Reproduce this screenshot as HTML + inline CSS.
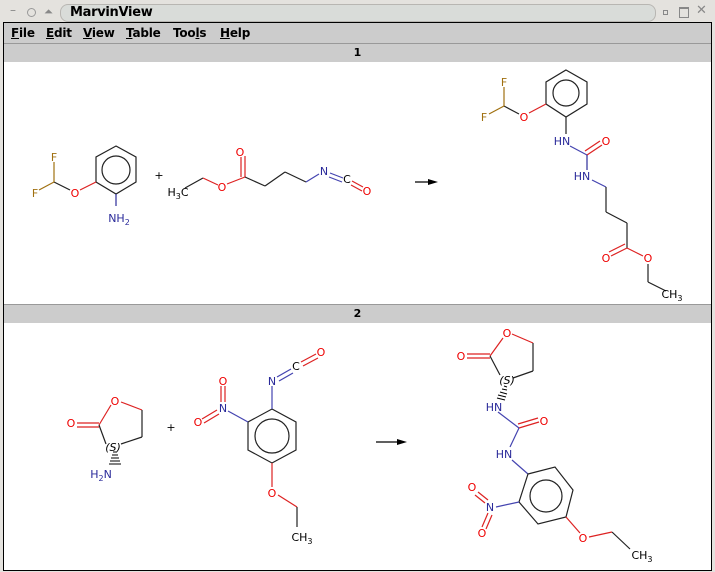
<!DOCTYPE html>
<html><head><style>
body{margin:0;width:715px;height:572px;background:#e4e2de;overflow:hidden;font-family:"DejaVu Sans","Liberation Sans",sans-serif;position:relative}
.t{position:absolute}
.m{position:absolute;top:26px;font-size:12px;font-weight:bold;letter-spacing:-0.2px}
</style></head><body>
<div class="t" style="left:60px;top:4px;width:594px;height:16px;border:1px solid #b8b6b2;border-radius:8px;background:#d9dcd9"></div>
<div class="t" style="left:70px;top:4px;font-size:13px;line-height:18px;color:#000;font-weight:bold;letter-spacing:-0.3px">MarvinView</div>
<div class="t" style="left:10px;top:3px;font-size:12px;color:#888">–</div>
<div class="t" style="left:27px;top:8px;width:7px;height:7px;border:1px solid #999;border-radius:50%"></div>
<div class="t" style="left:44px;top:5px;font-size:11px;color:#888">⏶</div>
<div class="t" style="left:663px;top:10px;width:3px;height:3px;border:1px solid #888"></div>
<div class="t" style="left:679px;top:7px;width:8px;height:8px;border:1px solid #888;border-top-width:2px"></div>
<div class="t" style="left:696px;top:3px;font-size:13px;color:#888">✕</div>
<div class="t" style="left:3px;top:22px;width:707px;height:547px;border:1px solid #000;background:#fff"></div>
<div class="t" style="left:4px;top:23px;width:707px;height:20px;background:#cccccc;border-bottom:1px solid #999"></div>
<div class="m" style="left:11px"><u>F</u>ile</div>
<div class="m" style="left:46px"><u>E</u>dit</div>
<div class="m" style="left:83px"><u>V</u>iew</div>
<div class="m" style="left:126px"><u>T</u>able</div>
<div class="m" style="left:173px">Too<u>l</u>s</div>
<div class="m" style="left:220px"><u>H</u>elp</div>
<div class="t" style="left:4px;top:44px;width:707px;height:18px;background:#cccccc;text-align:center;font-size:11px;font-weight:bold;line-height:18px">1</div>
<div class="t" style="left:4px;top:304px;width:707px;height:1px;background:#999"></div>
<div class="t" style="left:4px;top:305px;width:707px;height:18px;background:#cccccc;text-align:center;font-size:11px;font-weight:bold;line-height:18px">2</div>
<svg class="t" style="left:0;top:0" width="715" height="572" font-family="DejaVu Sans, Liberation Sans, sans-serif" font-size="11" text-anchor="middle">
<g stroke="#222" stroke-width="1.2" fill="none">
<polygon points="116,146 136,157 136,182 116,194 96,182 96,157"/>
<circle cx="116" cy="170" r="14"/>
<line x1="116" y1="194" x2="116" y2="206" stroke="#2a2a9a"/>
<line x1="96" y1="182" x2="80" y2="190" stroke="#d22"/>
<line x1="70" y1="190" x2="54" y2="182"/>
<line x1="54" y1="182" x2="54" y2="162" stroke="#a07010"/>
<line x1="54" y1="182" x2="39" y2="190" stroke="#a07010"/>
<line x1="185" y1="188" x2="203" y2="178"/>
<line x1="203" y1="178" x2="218" y2="185" stroke="#d22"/>
<line x1="227" y1="184" x2="245" y2="177" stroke="#d22"/>
<line x1="245" y1="177" x2="245" y2="156" stroke="#d22"/>
<line x1="241" y1="177" x2="241" y2="157" stroke="#d22"/>
<line x1="245" y1="177" x2="265" y2="186"/>
<line x1="265" y1="186" x2="285" y2="172"/>
<line x1="285" y1="172" x2="306" y2="182"/>
<line x1="306" y1="182" x2="319" y2="174" stroke="#4444b0"/>
<line x1="330" y1="173" x2="343" y2="178" stroke="#4444b0"/>
<line x1="329" y1="177" x2="342" y2="182" stroke="#4444b0"/>
<line x1="352" y1="181" x2="363" y2="187" stroke="#d22"/>
<line x1="351" y1="185" x2="362" y2="191" stroke="#d22"/>
<polygon points="566,70 587,82 587,104 566,117 546,104 546,82"/>
<circle cx="566" cy="93" r="13"/>
<line x1="546" y1="104" x2="529" y2="113" stroke="#d22"/>
<line x1="519" y1="114" x2="504" y2="106"/>
<line x1="504" y1="106" x2="504" y2="87" stroke="#a07010"/>
<line x1="504" y1="106" x2="489" y2="114" stroke="#a07010"/>
<line x1="566" y1="117" x2="566" y2="134"/>
<line x1="570" y1="146" x2="587" y2="155" stroke="#4444b0"/>
<line x1="587" y1="155" x2="602" y2="145" stroke="#d22"/>
<line x1="585" y1="151" x2="600" y2="141" stroke="#d22"/>
<line x1="587" y1="155" x2="587" y2="170" stroke="#2a2a9a"/>
<line x1="592" y1="180" x2="606" y2="187" stroke="#4444b0"/>
<line x1="606" y1="187" x2="606" y2="212"/>
<line x1="606" y1="212" x2="627" y2="223"/>
<line x1="627" y1="223" x2="627" y2="248"/>
<line x1="627" y1="248" x2="611" y2="256" stroke="#d22"/>
<line x1="625" y1="244" x2="609" y2="252" stroke="#d22"/>
<line x1="627" y1="248" x2="643" y2="256" stroke="#d22"/>
<line x1="648" y1="264" x2="648" y2="282"/>
<line x1="648" y1="282" x2="666" y2="291"/>
<line x1="415" y1="182" x2="432" y2="182" stroke="#000"/>
<line x1="376" y1="442" x2="401" y2="442" stroke="#000"/>
<line x1="99" y1="425" x2="111" y2="405" stroke="#d22"/>
<line x1="121" y1="402" x2="142" y2="410" stroke="#d22"/>
<line x1="142" y1="410" x2="142" y2="437"/>
<line x1="142" y1="437" x2="121" y2="444"/>
<line x1="106" y1="444" x2="99" y2="425"/>
<line x1="99" y1="423" x2="77" y2="423" stroke="#d22"/>
<line x1="99" y1="427" x2="77" y2="427" stroke="#d22"/>
<polygon points="272,409 296,422 296,450 272,463 248,450 248,422"/>
<circle cx="272" cy="436" r="17"/>
<line x1="272" y1="409" x2="272" y2="386" stroke="#4444b0"/>
<line x1="277" y1="377" x2="291" y2="369" stroke="#4444b0"/>
<line x1="279" y1="381" x2="293" y2="373" stroke="#4444b0"/>
<line x1="301" y1="362" x2="316" y2="354" stroke="#d22"/>
<line x1="303" y1="366" x2="318" y2="358" stroke="#d22"/>
<line x1="248" y1="422" x2="228" y2="411" stroke="#4444b0"/>
<line x1="221" y1="402" x2="221" y2="386" stroke="#d22"/>
<line x1="225" y1="402" x2="225" y2="386" stroke="#d22"/>
<line x1="217" y1="410" x2="202" y2="419" stroke="#d22"/>
<line x1="219" y1="414" x2="204" y2="423" stroke="#d22"/>
<line x1="272" y1="463" x2="272" y2="487" stroke="#d22"/>
<line x1="278" y1="495" x2="297" y2="507" stroke="#d22"/>
<line x1="297" y1="507" x2="297" y2="527"/>
<line x1="490" y1="356" x2="503" y2="338" stroke="#d22"/>
<line x1="512" y1="334" x2="533" y2="343" stroke="#d22"/>
<line x1="533" y1="343" x2="533" y2="371"/>
<line x1="533" y1="371" x2="513" y2="378"/>
<line x1="500" y1="375" x2="490" y2="356"/>
<line x1="490" y1="354" x2="467" y2="354" stroke="#d22"/>
<line x1="490" y1="358" x2="467" y2="358" stroke="#d22"/>
<line x1="498" y1="412" x2="519" y2="428" stroke="#4444b0"/>
<line x1="519" y1="428" x2="539" y2="422" stroke="#d22"/>
<line x1="518" y1="424" x2="538" y2="418" stroke="#d22"/>
<line x1="519" y1="428" x2="510" y2="447" stroke="#4444b0"/>
<line x1="512" y1="460" x2="528" y2="474" stroke="#4444b0"/>
<polygon points="528,474 555,467 573,490 566,517 538,524 519,502"/>
<circle cx="546" cy="496" r="16"/>
<line x1="519" y1="502" x2="496" y2="507" stroke="#4444b0"/>
<line x1="488" y1="500" x2="478" y2="492" stroke="#d22"/>
<line x1="485" y1="503" x2="475" y2="495" stroke="#d22"/>
<line x1="488" y1="513" x2="482" y2="527" stroke="#d22"/>
<line x1="492" y1="515" x2="486" y2="529" stroke="#d22"/>
<line x1="566" y1="517" x2="580" y2="533" stroke="#d22"/>
<line x1="589" y1="537" x2="612" y2="532" stroke="#d22"/>
<line x1="612" y1="532" x2="630" y2="549"/>
</g>
<g stroke="#000" stroke-width="1">
<line x1="113" y1="452" x2="117" y2="452"/><line x1="112" y1="455" x2="118" y2="455"/><line x1="111" y1="458" x2="119" y2="458"/><line x1="110" y1="461" x2="120" y2="461"/><line x1="109" y1="464" x2="121" y2="464"/>
<line x1="504" y1="386" x2="507" y2="387"/><line x1="502" y1="389" x2="507" y2="390"/><line x1="500" y1="392" x2="507" y2="394"/><line x1="498" y1="395" x2="506" y2="397"/><line x1="497" y1="398" x2="505" y2="400"/>
</g>
<g fill="#a07010"><text x="54" y="161">F</text><text x="35" y="197">F</text><text x="504" y="86">F</text><text x="484" y="121">F</text></g>
<g fill="#e00"><text x="75" y="197">O</text><text x="222" y="191">O</text><text x="240" y="156">O</text><text x="367" y="195">O</text>
<text x="524" y="121">O</text><text x="606" y="145">O</text><text x="606" y="262">O</text><text x="648" y="262">O</text>
<text x="115" y="405">O</text><text x="71" y="427">O</text><text x="321" y="356">O</text><text x="223" y="385">O</text><text x="198" y="426">O</text><text x="272" y="497">O</text>
<text x="507" y="337">O</text><text x="461" y="360">O</text><text x="544" y="425">O</text><text x="472" y="491">O</text><text x="482" y="537">O</text><text x="583" y="542">O</text></g>
<g fill="#2a2a9a"><text x="119" y="222">NH<tspan font-size="8" dy="3">2</tspan></text><text x="324" y="175">N</text>
<text x="562" y="145">HN</text><text x="582" y="180">HN</text>
<text x="101" y="478">H<tspan font-size="8" dy="3">2</tspan><tspan dy="-3">N</tspan></text>
<text x="272" y="385">N</text><text x="223" y="412">N</text>
<text x="494" y="411">HN</text><text x="504" y="458">HN</text><text x="490" y="511">N</text></g>
<g fill="#000"><text x="178" y="196">H<tspan font-size="8" dy="3">3</tspan><tspan dy="-3">C</tspan></text>
<text x="347" y="183">C</text><text x="296" y="370">C</text>
<text x="672" y="298">CH<tspan font-size="8" dy="3">3</tspan></text>
<text x="302" y="541">CH<tspan font-size="8" dy="3">3</tspan></text>
<text x="642" y="559">CH<tspan font-size="8" dy="3">3</tspan></text>
<text x="113" y="451" font-style="italic">(S)</text><text x="507" y="384" font-style="italic">(S)</text>
<text x="159" y="179">+</text><text x="171" y="431">+</text></g>
<polygon points="438,182 428,179 428,185" fill="#000"/>
<polygon points="407,442 397,439 397,445" fill="#000"/>
</svg>
</body></html>
